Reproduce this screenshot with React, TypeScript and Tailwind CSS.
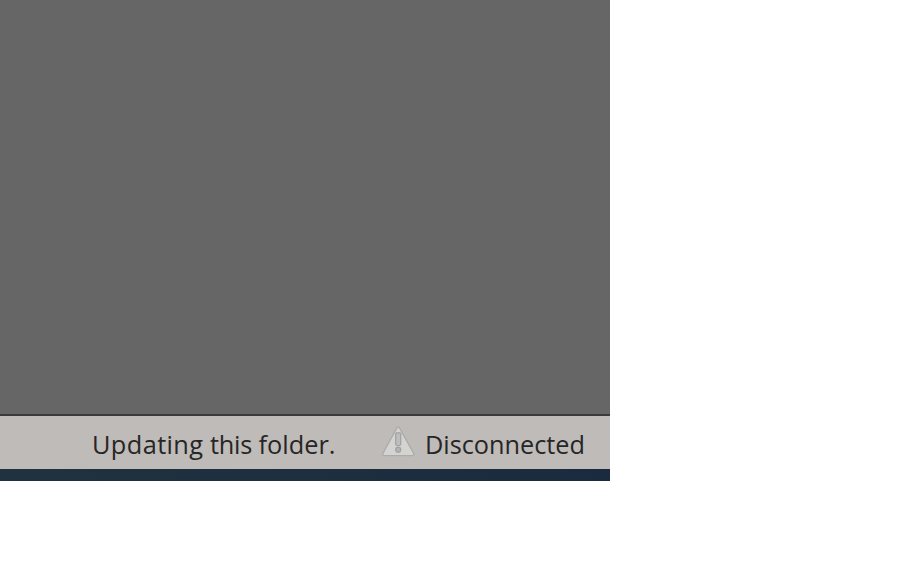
export default function App() {
  return (
    <div className="h-[579px] w-[910px] overflow-hidden bg-white">
      <div className="flex h-[481px] w-[610px] flex-col">
        <main className="h-[414px] shrink-0 bg-[#666666]" />
        <footer className="flex h-[55px] shrink-0 items-start border-t-2 border-[#3c3a3a] bg-[#bfbbb8] pl-[92px] font-['Open_Sans','Noto_Sans',sans-serif] text-[#262626]">
          <span className="w-[290px] shrink-0 whitespace-nowrap pt-[10px] text-[26px] leading-[36px]">
            <span className="inline-block origin-left scale-x-[0.975]">
              <span className="tracking-[0.4px]">Updating</span> <span className="tracking-[-0.3px]">this</span> folder.
            </span>
          </span>
          <svg className="mt-[10px] h-[32px] w-[33px] shrink-0" viewBox="0 0 33 32" fill="none">
            <path
              d="M14.9 1.9 Q16.2 0.2 17.5 1.9 L31.6 27.3 Q32.4 29.6 30.4 29.6 H2 Q0.1 29.6 1 27.3 Z"
              fill="#d3d3d2"
              stroke="#adaba9"
              strokeWidth="1.3"
            />
            <path d="M13.7 7.8 Q13.7 6.8 14.7 6.8 H17.7 Q18.7 6.8 18.7 7.8 V18 Q18.7 19.5 17.2 19.5 H15.2 Q13.7 19.5 13.7 18 Z" fill="#bebebd" stroke="#a2a1a0" strokeWidth="1.2" />
            <circle cx="16.2" cy="23.7" r="2.5" fill="#b5b5b4" stroke="#a2a1a0" strokeWidth="1.2" />
          </svg>
          <span className="ml-[10px] whitespace-nowrap pt-[10px] text-[26px] leading-[36px]">
            <span className="inline-block origin-left scale-x-[0.972]">Disconnected</span>
          </span>
        </footer>
        <div className="h-[12px] shrink-0 bg-linear-to-r from-[#20323f] to-[#1b2b3f]" />
      </div>
    </div>
  );
}
